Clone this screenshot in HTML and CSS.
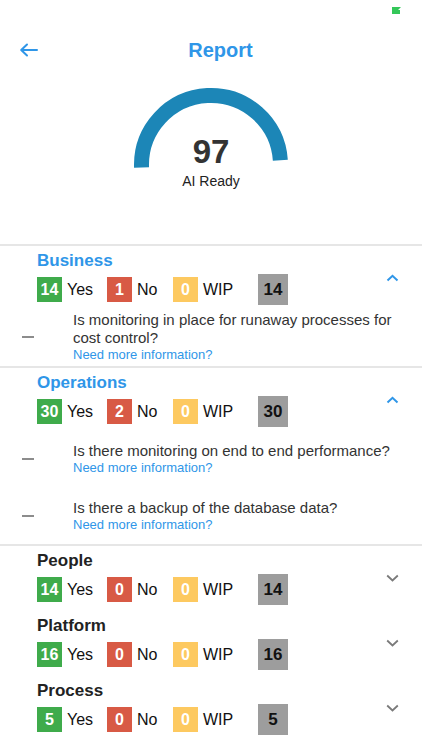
FILE: index.html
```html
<!DOCTYPE html>
<html lang="en">
<head>
<meta charset="utf-8">
<title>Report</title>
<link rel="stylesheet" href="styles.css">
</head>
<body>
<div class="screen">
  <div class="status">
    <svg class="battery" width="9" height="7" viewBox="0 0 9 7"><polygon points="0,0 9,0 6,3 8,3 8,7 0,7" fill="#34c759"/></svg>
  </div>
  <header class="nav">
    <svg class="back" width="19" height="14" viewBox="0 0 19 14"><path d="M18 7H2.5M8 1.5L2.2 7L8 12.5" fill="none" stroke="#2f96e8" stroke-width="2" stroke-linecap="round" stroke-linejoin="round"/></svg>
    <h1 class="title">Report</h1>
    <span></span>
  </header>
  <div class="gauge">
    <svg class="arc" width="160" height="90" viewBox="0 0 160 90"><path d="M10.54 83.4 A69.5 69.5 0 0 1 149.33 76.15" fill="none" stroke="#1c86b7" stroke-width="15"/></svg>
    <div class="score">
      <div class="score-num">97</div>
      <div class="score-label">AI Ready</div>
    </div>
  </div>

  <section class="cat">
    <div class="cat-head">
      <h2 class="cat-title blue">Business</h2>
      <div class="stats-row">
        <div class="stats">
          <div class="stat"><span class="badge green">14</span><span class="lbl">Yes</span></div>
          <div class="stat"><span class="badge red">1</span><span class="lbl">No</span></div>
          <div class="stat"><span class="badge yellow">0</span><span class="lbl">WIP</span></div>
          <span class="total">14</span>
        </div>
        <svg class="chev" width="13" height="8" viewBox="0 0 13 8"><path d="M1.5 6.5L6.5 1.8L11.5 6.5" fill="none" stroke="#2f96e8" stroke-width="2"/></svg>
      </div>
    </div>
    <ul class="questions">
      <li class="q"><span class="dash"></span><div class="q-body"><p class="q-text">Is monitoring in place for runaway processes for cost control?</p><a class="more" href="#">Need more information?</a></div></li>
    </ul>
  </section>

  <section class="cat">
    <div class="cat-head">
      <h2 class="cat-title blue">Operations</h2>
      <div class="stats-row">
        <div class="stats">
          <div class="stat"><span class="badge green">30</span><span class="lbl">Yes</span></div>
          <div class="stat"><span class="badge red">2</span><span class="lbl">No</span></div>
          <div class="stat"><span class="badge yellow">0</span><span class="lbl">WIP</span></div>
          <span class="total">30</span>
        </div>
        <svg class="chev" width="13" height="8" viewBox="0 0 13 8"><path d="M1.5 6.5L6.5 1.8L11.5 6.5" fill="none" stroke="#2f96e8" stroke-width="2"/></svg>
      </div>
    </div>
    <ul class="questions">
      <li class="q"><span class="dash"></span><div class="q-body"><p class="q-text">Is there monitoring on end to end performance?</p><a class="more" href="#">Need more information?</a></div></li>
      <li class="q"><span class="dash"></span><div class="q-body"><p class="q-text">Is there a backup of the database data?</p><a class="more" href="#">Need more information?</a></div></li>
    </ul>
  </section>

  <div class="collapsed-group">
    <section class="cat collapsed">
      <div class="cat-head">
        <h2 class="cat-title">People</h2>
        <div class="stats-row">
          <div class="stats">
            <div class="stat"><span class="badge green">14</span><span class="lbl">Yes</span></div>
            <div class="stat"><span class="badge red">0</span><span class="lbl">No</span></div>
            <div class="stat"><span class="badge yellow">0</span><span class="lbl">WIP</span></div>
            <span class="total">14</span>
          </div>
          <svg class="chev" width="13" height="8" viewBox="0 0 13 8"><path d="M1.2 1.5L6.5 6.5L11.8 1.5" fill="none" stroke="#7a7a7a" stroke-width="1.8"/></svg>
        </div>
      </div>
    </section>
    <section class="cat collapsed">
      <div class="cat-head">
        <h2 class="cat-title">Platform</h2>
        <div class="stats-row">
          <div class="stats">
            <div class="stat"><span class="badge green">16</span><span class="lbl">Yes</span></div>
            <div class="stat"><span class="badge red">0</span><span class="lbl">No</span></div>
            <div class="stat"><span class="badge yellow">0</span><span class="lbl">WIP</span></div>
            <span class="total">16</span>
          </div>
          <svg class="chev" width="13" height="8" viewBox="0 0 13 8"><path d="M1.2 1.5L6.5 6.5L11.8 1.5" fill="none" stroke="#7a7a7a" stroke-width="1.8"/></svg>
        </div>
      </div>
    </section>
    <section class="cat collapsed">
      <div class="cat-head">
        <h2 class="cat-title">Process</h2>
        <div class="stats-row">
          <div class="stats">
            <div class="stat"><span class="badge green">5</span><span class="lbl">Yes</span></div>
            <div class="stat"><span class="badge red">0</span><span class="lbl">No</span></div>
            <div class="stat"><span class="badge yellow">0</span><span class="lbl">WIP</span></div>
            <span class="total">5</span>
          </div>
          <svg class="chev" width="13" height="8" viewBox="0 0 13 8"><path d="M1.2 1.5L6.5 6.5L11.8 1.5" fill="none" stroke="#7a7a7a" stroke-width="1.8"/></svg>
        </div>
      </div>
    </section>
  </div>
</div>
</body>
</html>
```
FILE: styles.css
```css
* { box-sizing: border-box; }
html, body { margin: 0; padding: 0; background: #fff; }
body { font-family: "Liberation Sans", Arial, sans-serif; color: #111; }
.screen { width: 422px; height: 750px; overflow: hidden; background: #fff; }

.status { height: 20px; display: flex; justify-content: flex-end; align-items: flex-start; padding: 7px 21px 0 0; }
.battery { display: block; }

.nav { height: 60px; display: grid; grid-template-columns: 1fr auto 1fr; align-items: center; padding: 0 0 0 19px; }
.back { display: block; }
.title { margin: 0; font-size: 20px; font-weight: 700; color: #2f96e8; line-height: 24px; }

.gauge { display: grid; justify-content: center; margin: 4px 0 54px; }
.arc, .score { grid-area: 1 / 1; }
.arc { display: block; }
.score { padding-top: 49px; text-align: center; }
.score-num { font-size: 33px; font-weight: 700; line-height: 38px; color: #333; }
.score-label { margin-top: 2px; font-size: 14px; line-height: 17px; color: #222; }

.cat { border-top: 2px solid #e6e6e6; }
.collapsed-group .cat + .cat { border-top: none; }
.cat-head { padding: 5px 23px 0 37px; }
.collapsed .cat-head { padding-bottom: 6px; }
.cat-title { margin: 0; font-size: 17px; line-height: 20px; font-weight: 700; color: #222; }
.cat-title.blue { color: #2f96e8; }

.stats-row { display: flex; align-items: flex-start; margin-top: 3px; }
.stats { display: grid; grid-template-columns: 70px 66px 85px 30px; align-items: center; height: 31px; }
.stat { display: flex; align-items: center; }
.badge { width: 25px; height: 25px; display: flex; align-items: center; justify-content: center; color: #fff; font-weight: 700; font-size: 16px; }
.green { background: #3fab4b; }
.red { background: #d85a45; }
.yellow { background: #fdc960; }
.lbl { margin-left: 5px; font-size: 16px; color: #111; }
.total { width: 30px; height: 31px; display: flex; align-items: center; justify-content: center; background: #9d9d9d; color: #111; font-weight: 700; font-size: 17px; }
.chev { display: block; margin-left: auto; margin-top: 0; }

.questions { list-style: none; margin: 0; padding: 3px 0 0; }
.q { display: flex; align-items: center; min-height: 57px; padding: 3px 22px; }
.dash { flex: none; width: 12px; height: 2px; background: #8c8c8c; }
.q-body { margin-left: 39px; }
.q-text { margin: 0; font-size: 15px; line-height: 18px; color: #333; }
.more { display: block; font-size: 13px; line-height: 16px; color: #2f96e8; text-decoration: none; }
```
